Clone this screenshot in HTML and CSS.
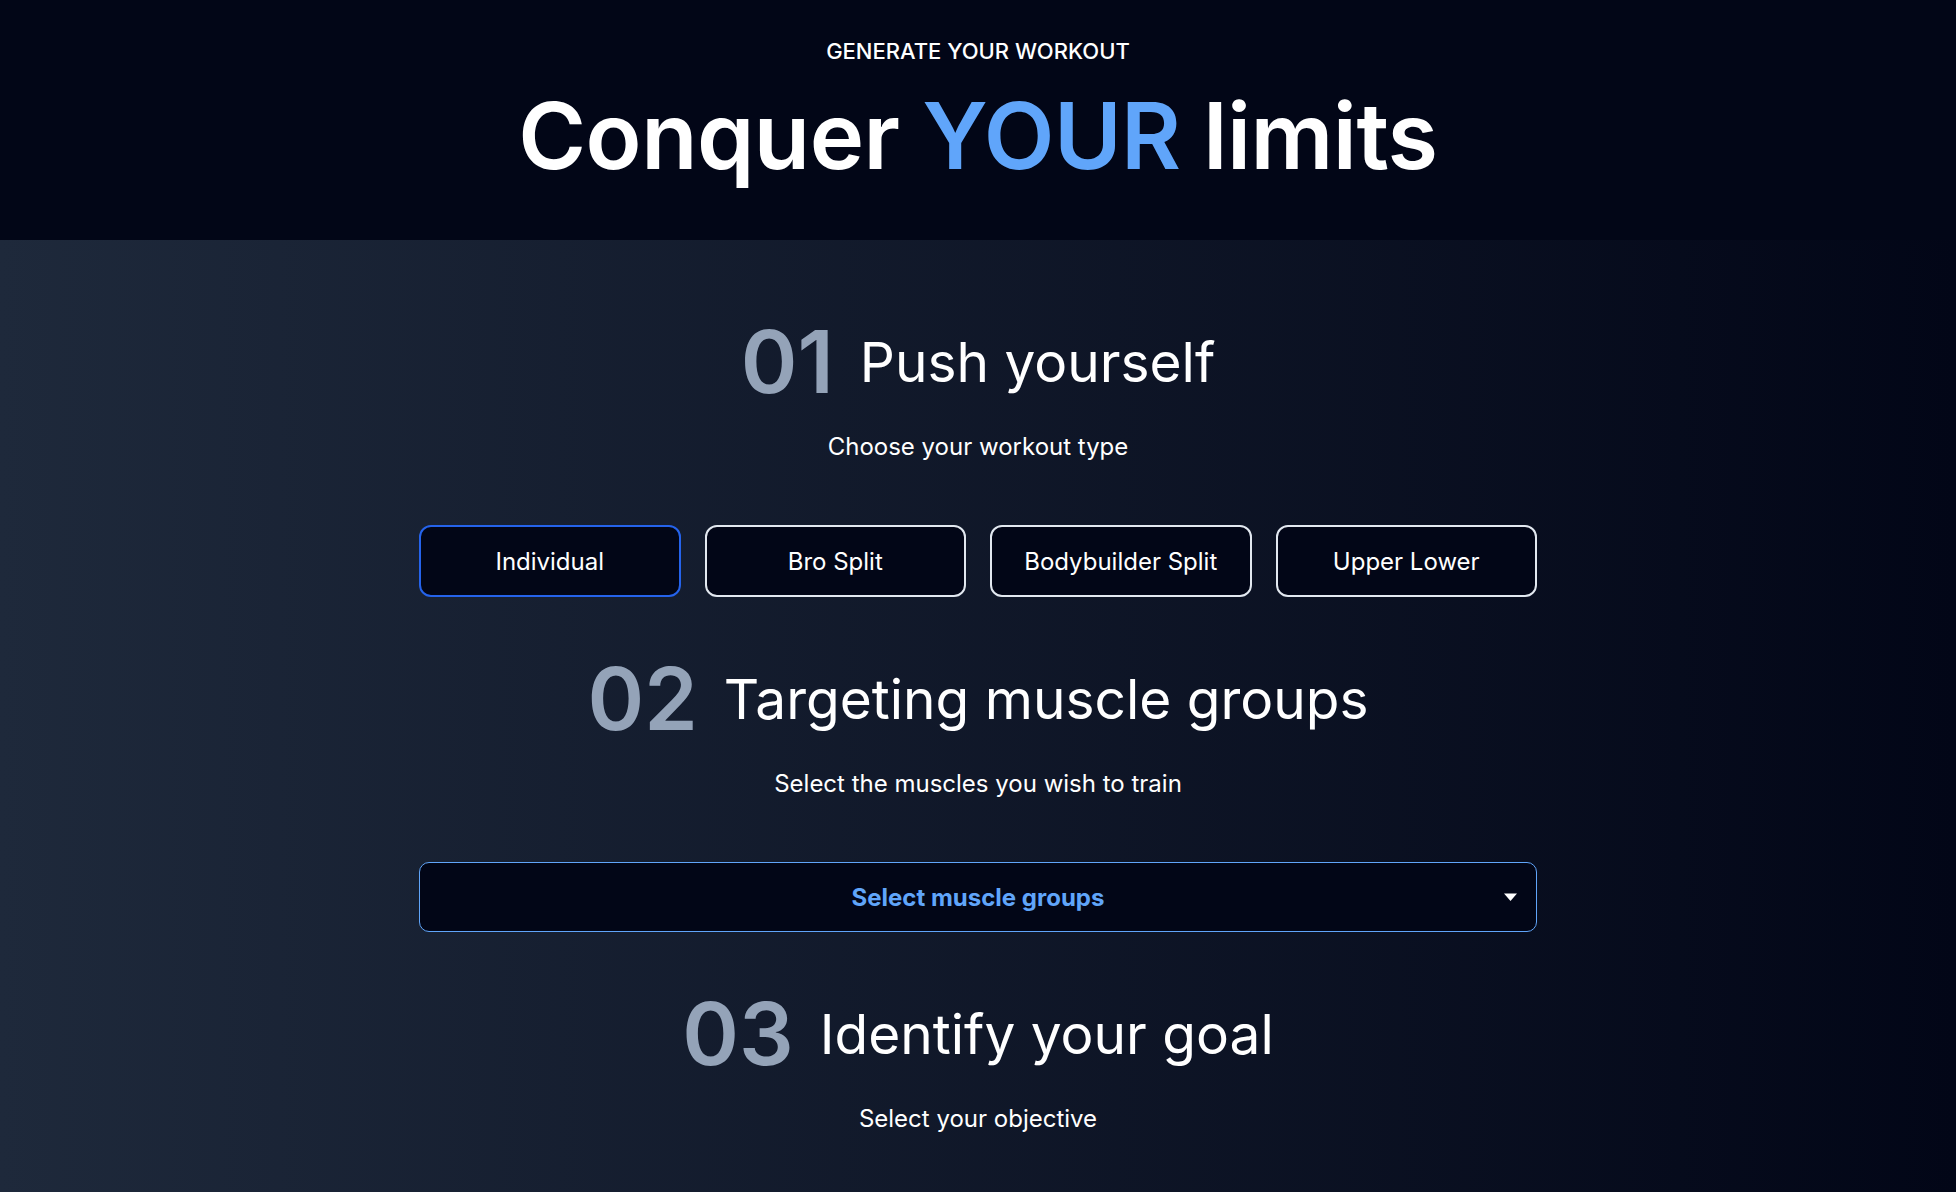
FILE: index.html
```html
<!DOCTYPE html>
<html lang="en">
<head>
<meta charset="utf-8">
<title>Generate your workout</title>
<link rel="stylesheet" href="styles.css">
</head>
<body>
<header class="hero">
  <p class="eyebrow">GENERATE YOUR WORKOUT</p>
  <h1 class="hero-title">Conquer <span class="accent">YOUR</span> limits</h1>
</header>
<main class="main">
  <section class="step">
    <div class="step-head">
      <span class="step-num">01</span>
      <h2 class="step-title">Push yourself</h2>
    </div>
    <p class="step-sub">Choose your workout type</p>
    <div class="type-grid">
      <button class="type-btn is-active">Individual</button>
      <button class="type-btn">Bro Split</button>
      <button class="type-btn">Bodybuilder Split</button>
      <button class="type-btn">Upper Lower</button>
    </div>
  </section>
  <section class="step">
    <div class="step-head">
      <span class="step-num">02</span>
      <h2 class="step-title">Targeting muscle groups</h2>
    </div>
    <p class="step-sub">Select the muscles you wish to train</p>
    <button class="select-box">
      <span class="select-label">Select muscle groups</span>
      <svg class="caret" width="15" height="10" viewBox="0 0 15 10"><path d="M1 1.5h13L7.5 9z" fill="#ffffff"/></svg>
    </button>
  </section>
  <section class="step">
    <div class="step-head">
      <span class="step-num">03</span>
      <h2 class="step-title">Identify your goal</h2>
    </div>
    <p class="step-sub">Select your objective</p>
  </section>
</main>
</body>
</html>
```
FILE: styles.css
```css
* { box-sizing: border-box; }
html, body { margin: 0; padding: 0; }
body {
  font-family: Inter, "Noto Sans", sans-serif;
  color: #ffffff;
  background: linear-gradient(to right, #1e293b, #020617);
  min-height: 1192px;
}
.hero {
  background: #020617;
  height: 240px;
  display: flex;
  flex-direction: column;
  align-items: center;
  padding-top: 37px;
}
.eyebrow {
  margin: 0;
  font-size: 22px;
  font-weight: 500;
  line-height: 28px;
}
.hero-title {
  margin: 25px 0 0;
  font-size: 92px;
  font-weight: 600;
  line-height: 1;
  letter-spacing: -0.5px;
}
.accent { color: #60a5fa; }
.main {
  display: flex;
  flex-direction: column;
  align-items: center;
  gap: 54px;
  padding-top: 74px;
}
.step {
  display: flex;
  flex-direction: column;
  align-items: center;
  width: 1118px;
}
.step-head {
  display: flex;
  align-items: center;
  gap: 26px;
  height: 96px;
}
.step-num {
  font-size: 86px;
  font-weight: 600;
  line-height: 1;
  color: #94a3b8;
}
.step-title {
  margin: 0;
  font-size: 55px;
  font-weight: 400;
  line-height: 1;
}
.step-sub {
  margin: 21px 0 0;
  font-size: 24px;
  line-height: 32px;
}
.type-grid {
  margin-top: 62px;
  width: 100%;
  display: grid;
  grid-template-columns: repeat(4, 1fr);
  gap: 24px;
}
.type-btn {
  height: 72px;
  background: #020617;
  border: 2px solid #e2e8f0;
  border-radius: 12px;
  color: #ffffff;
  font-family: inherit;
  font-size: 24px;
}
.type-btn.is-active { border-color: #2563eb; }
.select-box {
  margin-top: 62px;
  width: 100%;
  height: 70px;
  background: #020617;
  border: 1px solid #60a5fa;
  border-radius: 10px;
  display: flex;
  align-items: center;
  justify-content: center;
  position: relative;
  font-family: inherit;
}
.select-label {
  color: #60a5fa;
  font-size: 24px;
  font-weight: 700;
}
.caret {
  position: absolute;
  right: 18px;
  top: 29px;
}
```
